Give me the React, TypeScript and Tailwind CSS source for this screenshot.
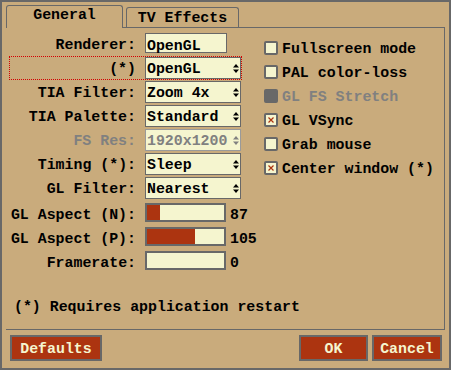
import React from "react";

const FONT = "font-['Liberation_Mono','DejaVu_Sans_Mono',monospace] font-bold text-[14.9px]";

function Arrows({ color }: { color: string }) {
  return (
    <svg width="6" height="9" viewBox="0 0 6 9" className="mr-[1px] shrink-0">
      <path d="M3 0L6 3.5H0Z" fill={color} />
      <path d="M0 5.5H6L3 9Z" fill={color} />
    </svg>
  );
}

function Popup({ value, disabled }: { value: string; disabled?: boolean }) {
  return (
    <div
      className={`flex h-[22px] w-[96px] shrink-0 items-center border bg-[#f5f5cf] pl-[1px] ${
        disabled ? "border-[#9a9a9a] text-[#808080]" : "border-[#686868] text-black"
      }`}
    >
      <span className="flex-1 pt-[2px] leading-[12px] whitespace-pre">{value}</span>
      <Arrows color={disabled ? "#808080" : "#000000"} />
    </div>
  );
}

function Label({ text, disabled, extra }: { text: string; disabled?: boolean; extra?: string }) {
  return (
    <span
      className={`w-[126px] shrink-0 text-right leading-[12px] whitespace-pre ${extra ?? "pt-[2px]"} ${
        disabled ? "text-[#808080]" : "text-black"
      }`}
    >
      {text}
    </span>
  );
}

function PopupRow({ label, value, disabled, focus }: { label: string; value: string; disabled?: boolean; focus?: boolean }) {
  return (
    <div
      className={`flex h-[24px] items-center border ${
        focus ? "border-dotted border-[#d40000]" : "border-transparent"
      }`}
    >
      <Label text={label} disabled={disabled} />
      <div className="ml-[9px] shrink-0">
        <Popup value={value} disabled={disabled} />
      </div>
    </div>
  );
}

function SliderRow({ label, value, fill }: { label: string; value: string; fill: number }) {
  return (
    <div className="flex h-[24px] items-center border border-transparent">
      <Label text={label} extra="pt-[5px]" />
      <div className="ml-[9px] flex h-[19px] w-[81px] shrink-0 border-2 border-[#686868] bg-[#f5f5cf]">
        <div className="h-full bg-[#ac3410]" style={{ width: fill }} />
      </div>
      <span className="ml-[4px] shrink-0 pt-[5px] leading-[12px] text-black">{value}</span>
    </div>
  );
}

function Check({ label, checked, disabled }: { label: string; checked?: boolean; disabled?: boolean }) {
  return (
    <div className="flex h-[24px] items-center">
      <div
        className={`flex h-[14px] w-[14px] shrink-0 items-center justify-center rounded-[2px] border-2 border-[#686868] ${
          disabled ? "bg-[#686868]" : "bg-[#f5f5cf]"
        }`}
      >
        {checked && (
          <svg width="6" height="6" viewBox="0 0 6 6">
            <path d="M0.5 0.5L5.5 5.5M5.5 0.5L0.5 5.5" stroke="#ac3410" strokeWidth="1.2" />
          </svg>
        )}
      </div>
      <span className={`ml-[4px] pt-[2px] leading-[12px] whitespace-pre ${disabled ? "text-[#808080]" : "text-black"}`}>
        {label}
      </span>
    </div>
  );
}

function Button({ text, w }: { text: string; w: string }) {
  return (
    <div
      className={`flex h-[26px] items-center justify-center border-2 border-[#686868] bg-[#ac3410] text-[#f5f5cf] ${w}`}
    >
      <span className="pt-[2px] leading-[12px]">{text}</span>
    </div>
  );
}

export default function App() {
  return (
    <div className={`h-[370px] w-[451px] border-2 border-[#686868] bg-[#c9ab7c] ${FONT}`}>
      {/* tabs */}
      <div className="flex h-[25px] items-end pl-[4px] pt-[3px]">
        <div className="relative z-10 -mb-px flex h-[23px] w-[117px] justify-center rounded-t-[3px] border-l border-r border-t border-[#686868] bg-[#c9ab7c] text-black">
          <span className="pt-[3px] leading-[12px]">General</span>
        </div>
        <div className="ml-[3px] flex h-[20px] w-[113px] justify-center rounded-t-[3px] border-l border-r border-t border-[#686868] text-black">
          <span className="pt-[4px] leading-[12px] whitespace-pre">TV Effects</span>
        </div>
      </div>

      {/* content box */}
      <div className="ml-[4px] flex h-[303px] w-[439px] flex-col border-b border-r border-t border-[#686868]">
        <div className="flex">
          <div className="ml-[3px] flex w-[233px] shrink-0 flex-col pt-[2px]">
            <div className="flex h-[26px] items-start border border-transparent">
              <span className="mt-[8px] w-[126px] shrink-0 text-right leading-[12px] text-black">Renderer:</span>
              <div className="ml-[9px] mt-[2px] h-[20px] w-[82px] shrink-0 border border-[#686868] bg-[#f5f5cf] pl-[1px] pt-[6px]">
                <span className="block leading-[12px] text-black">OpenGL</span>
              </div>
            </div>
            <PopupRow label="(*)" value="OpenGL" focus />
            <PopupRow label="TIA Filter:" value="Zoom 4x" />
            <PopupRow label="TIA Palette:" value="Standard" />
            <PopupRow label="FS Res:" value="1920x1200" disabled />
            <PopupRow label="Timing (*):" value="Sleep" />
            <PopupRow label="GL Filter:" value="Nearest" />
            <SliderRow label="GL Aspect (N):" value="87" fill={13} />
            <SliderRow label="GL Aspect (P):" value="105" fill={48} />
            <SliderRow label="Framerate:" value="0" fill={0} />
          </div>
          <div className="ml-[22px] flex flex-col pt-[8px]">
            <Check label="Fullscreen mode" />
            <Check label="PAL color-loss" />
            <Check label="GL FS Stretch" disabled />
            <Check label="GL VSync" checked />
            <Check label="Grab mouse" />
            <Check label="Center window (*)" checked />
          </div>
        </div>
        <div className="mt-[26px] pl-[8px] leading-[18px] text-black whitespace-pre">
          (*) Requires application restart
        </div>
      </div>

      {/* bottom buttons */}
      <div className="mt-[5px] flex pl-[8px] pr-[7px]">
        <Button text="Defaults" w="w-[92px]" />
        <div className="flex-1" />
        <Button text="OK" w="w-[69px]" />
        <div className="ml-[4px]">
          <Button text="Cancel" w="w-[70px]" />
        </div>
      </div>
    </div>
  );
}
